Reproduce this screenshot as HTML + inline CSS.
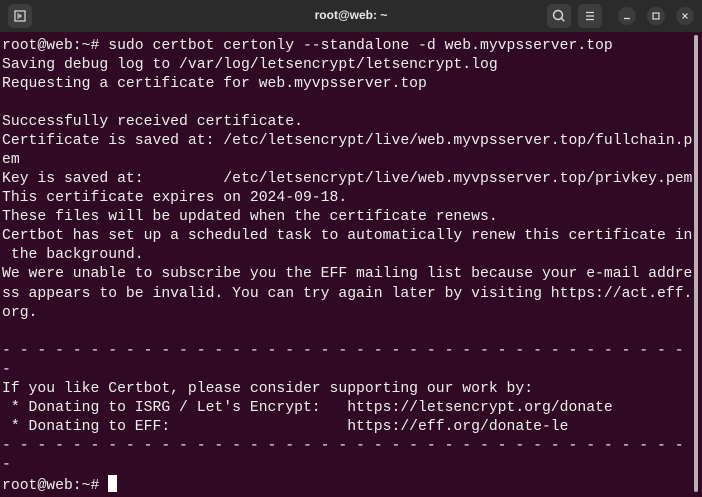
<!DOCTYPE html>
<html><head><style>
html,body{margin:0;padding:0;width:702px;height:497px;overflow:hidden;background:#300a24;}
.tb{position:absolute;left:0;top:0;width:702px;height:32px;background:#2b2b2b;}
.title{position:absolute;left:0;width:702px;top:8px;text-align:center;color:#e8e8e8;font:bold 12px "Liberation Sans",sans-serif;}
.btn{position:absolute;top:4px;width:24px;height:24px;border-radius:5px;background:#3d3d3d;}
.circ{position:absolute;top:7px;width:18px;height:18px;border-radius:50%;background:#3c3c3c;}
pre{position:absolute;left:2px;top:36.5px;margin:0;color:#eeeeec;font:14.75px/19.08px "Liberation Mono",monospace;white-space:pre;}
.cur{display:inline-block;width:9px;height:17px;background:#fff;vertical-align:-3px;}
.sb{position:absolute;left:694px;top:35px;width:4px;height:457px;background:#b8b0b4;border-radius:2px;}
</style></head><body>
<div class="tb">
<div class="btn" style="left:8px;"><svg width="24" height="24"><rect x="7" y="7" width="10" height="10" fill="none" stroke="#ddd" stroke-width="1.2"/><path d="M10 9v6M10 12h4M12 10v4" stroke="#ddd" stroke-width="1"/></svg></div>
<div class="title">root@web: ~</div>
<div class="btn" style="left:547px;"><svg width="24" height="24"><circle cx="11" cy="11" r="4.5" fill="none" stroke="#ddd" stroke-width="1.4"/><path d="M14.3 14.3l3 3" stroke="#ddd" stroke-width="1.4"/></svg></div>
<div class="btn" style="left:578px;"><svg width="24" height="24"><path d="M8 8.5h8M8 12h8M8 15.5h8" stroke="#ddd" stroke-width="1.2"/></svg></div>
<div class="circ" style="left:618px;"><svg width="18" height="18"><path d="M6 11.5h6" stroke="#ddd" stroke-width="1.3"/></svg></div>
<div class="circ" style="left:647px;"><svg width="18" height="18"><rect x="6" y="6" width="6" height="6" fill="none" stroke="#ddd" stroke-width="1.2"/></svg></div>
<div class="circ" style="left:676px;"><svg width="18" height="18"><path d="M6.5 6.5l5 5M11.5 6.5l-5 5" stroke="#ddd" stroke-width="1.2"/></svg></div>
</div>
<pre>root@web:~# sudo certbot certonly --standalone -d web.myvpsserver.top
Saving debug log to /var/log/letsencrypt/letsencrypt.log
Requesting a certificate for web.myvpsserver.top

Successfully received certificate.
Certificate is saved at: /etc/letsencrypt/live/web.myvpsserver.top/fullchain.p
em
Key is saved at:         /etc/letsencrypt/live/web.myvpsserver.top/privkey.pem
This certificate expires on 2024-09-18.
These files will be updated when the certificate renews.
Certbot has set up a scheduled task to automatically renew this certificate in
 the background.
We were unable to subscribe you the EFF mailing list because your e-mail addre
ss appears to be invalid. You can try again later by visiting https://act.eff.
org.

- - - - - - - - - - - - - - - - - - - - - - - - - - - - - - - - - - - - - - - 
-
If you like Certbot, please consider supporting our work by:
 * Donating to ISRG / Let's Encrypt:   https://letsencrypt.org/donate
 * Donating to EFF:                    https://eff.org/donate-le
- - - - - - - - - - - - - - - - - - - - - - - - - - - - - - - - - - - - - - - 
-
root@web:~# <span class="cur"></span></pre>
<div class="sb"></div>
</body></html>
